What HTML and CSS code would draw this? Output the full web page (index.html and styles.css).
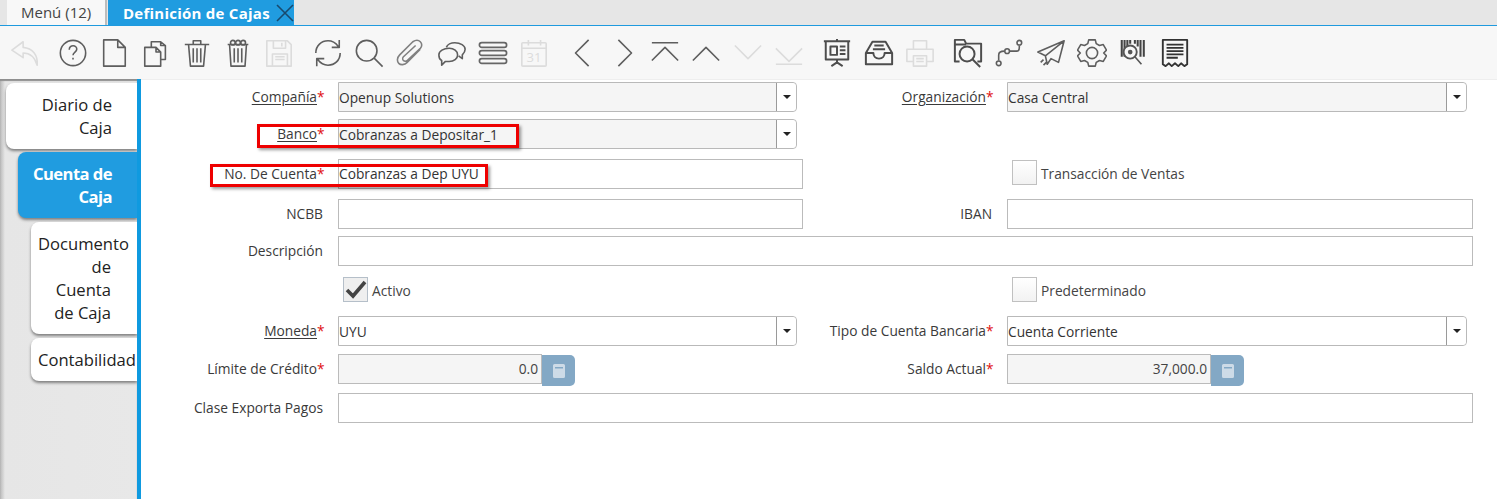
FILE: index.html
```html
<!DOCTYPE html>
<html lang="es">
<head>
<meta charset="utf-8">
<title>Definición de Cajas</title>
<link rel="stylesheet" href="styles.css">
</head>
<body>
<div class="tabbar">
  <div class="tab-menu">Menú (12)</div>
  <div class="tab-active"><span>Definición de Cajas</span>
    <svg class="tab-close" width="18" height="18" viewBox="0 0 18 18"><path d="M1 1l16 16M17 1L1 17"/></svg>
  </div>
</div>
<div class="toolbar">
  <div class="tb off"><svg viewBox="0 0 32 32"><path d="M14 4L2 13l12 8v-5c7 0 12 3 15 13 1-11-5-18-15-19z"/></svg></div>
  <div class="tb sep"><svg viewBox="0 0 32 32"><circle cx="16" cy="16" r="13.500"/><path d="M12 12.500c0-6 8.500-5 8-.5 0 3-4 3-4 6.500"/><path d="M16 21v2"/></svg></div>
  <div class="tb"><svg viewBox="0 0 32 32"><path d="M5 2h15l8 8v20H5zM20 2v8h8"/></svg></div>
  <div class="tb"><svg viewBox="0 0 32 32"><path d="M4 10h12l5 5v15H4zM11 10V4h10l5 4v15h-5M16 10v5h5M21 4v4h5"/></svg></div>
  <div class="tb"><svg viewBox="0 0 32 32"><path d="M3 7h26M12 6V3h8v3M7 7l2 23h14l2-23M12 11v15M16 11v15M20 11v15"/></svg></div>
  <div class="tb"><svg viewBox="0 0 32 32"><path d="M5 7h22M7 7l1.500 23h15L25 7M12 11v15M16 11v15M20 11v15"/><circle cx="10.500" cy="5" r="2.500"/><circle cx="16" cy="5" r="2.500"/><circle cx="21.500" cy="5" r="2.500"/></svg></div>
  <div class="tb off"><svg viewBox="0 0 32 32"><path d="M3 3h22l4 4v23H3zM10 3v8h13V3M19 5v4M9 30V17h16v13M12 20h10M12 23h10"/></svg></div>
  <div class="tb sep"><svg viewBox="0 0 32 32"><path d="M3 16C3 8 9 3 16 3c4 0 8 2 11 6M29 16c0 8-6 13-13 13-4 0-8-2-11-6M28 2v8h-8M4 30v-8h8"/></svg></div>
  <div class="tb"><svg viewBox="0 0 32 32"><circle cx="13.500" cy="13.500" r="11"/><path d="M21.500 21.500l9 9"/></svg></div>
  <div class="tb clip"><svg viewBox="0 0 32 32"><path d="M27 12L13 26c-3 3-7 3-9 1s-2-6 1-9L19 4c3-2 6-2 8 0s2 5 0 7L13 24c-1 1-3 1-4 0s-1-3 0-4L22 8"/></svg></div>
  <div class="tb"><svg viewBox="0 0 32 32"><path d="M13 11c5 0 9 3 9 7s-4 7-9 7H9l-4 4v-5c-2-1-3-4-3-6 0-4 5-7 11-7z"/><path d="M10 10c1-3 5-5 9-5 6 0 11 3 11 7 0 2-1 4-3 6v4l-4-3"/></svg></div>
  <div class="tb thick"><svg viewBox="0 0 32 32"><rect x="1.500" y="5" width="29" height="5" rx="2.500"/><rect x="1.500" y="13.500" width="29" height="5" rx="2.500"/><rect x="1.500" y="22" width="29" height="5" rx="2.500"/></svg></div>
  <div class="tb off"><svg viewBox="0 0 32 32"><rect x="3" y="5" width="26" height="25" rx="1"/><path d="M3 11h26M10 2v6M23 2v6"/><text x="16" y="26" text-anchor="middle" class="cal">31</text></svg></div>
  <div class="tb sep"><svg viewBox="0 0 32 32"><path d="M22 2L8 16l14 14"/></svg></div>
  <div class="tb"><svg viewBox="0 0 32 32"><path d="M10 2l14 14-14 14"/></svg></div>
  <div class="tb"><svg viewBox="0 0 32 32"><path d="M2 5h28M2 24L16 10l14 14"/></svg></div>
  <div class="tb"><svg viewBox="0 0 32 32"><path d="M2 24L16 10l14 14"/></svg></div>
  <div class="tb off"><svg viewBox="0 0 32 32"><path d="M2 8l14 14L30 8"/></svg></div>
  <div class="tb off"><svg viewBox="0 0 32 32"><path d="M2 28h28M2 11l14 14 14-14"/></svg></div>
  <div class="tb sep heavy"><svg viewBox="0 0 32 32"><path d="M2 3.500h28M4 4v19h24V4M16 1v3M16 23v3M10 30l6-4 6 4M9 9h7v9H9zM19 9h6M19 13h6M19 17h6"/></svg></div>
  <div class="tb heavy"><svg viewBox="0 0 32 32"><path d="M9 4h14l7 12v12H2V16zM2 16h8c0 3 2 6 6 6s6-3 6-6h8M11 8h10M9.500 12h13"/></svg></div>
  <div class="tb off"><svg viewBox="0 0 32 32"><path d="M9 12V3h14v9M9 25H2V12h28v13h-7M9 19h14v11H9zM12 22h8M12 25h8"/></svg></div>
  <div class="tb sep heavy"><svg viewBox="0 0 32 32"><path d="M26 25h4V6H14l-2-4H2v23h5M2 7h12"/><circle cx="15" cy="17" r="8"/><path d="M21 23l8 8"/></svg></div>
  <div class="tb"><svg viewBox="0 0 32 32"><circle cx="5" cy="27" r="2.500"/><circle cx="14" cy="14" r="2.500"/><circle cx="27" cy="5" r="2.500"/><path d="M5 24v-6c0-3 2-4 6-4M17 14h7c2 0 3-2 3-4V8"/></svg></div>
  <div class="tb"><svg viewBox="0 0 32 32"><path d="M30 3L2 15l8 4zM30 3L10 19l2 9 4-6 8 4zM8 23l-3 3M11 26l-3 3"/></svg></div>
  <div class="tb"><svg viewBox="0 0 32 32"><circle cx="16" cy="16" r="6"/><path d="M12.500 2h7l1 4 3.500 2 4-1 3.500 6-3 3 3 3-3.500 6-4-1-3.500 2-1 4h-7l-1-4L8 24l-4 1-3.500-6 3-3-3-3L4 7l4 1 3.500-2z"/></svg></div>
  <div class="tb"><svg class="bars" viewBox="0 0 32 32"><path d="M4 2v18M7 2v18M10 2v7M13 2v4M18 2v4M21 2v7M24 2v18M27.500 2v18"/><circle cx="13" cy="15" r="7" class="lens"/><circle cx="13" cy="15" r="2.500" class="lens-in"/><path d="M18 20l7 8" class="lens-h"/></svg></div>
  <div class="tb dark"><svg viewBox="0 0 32 32"><path d="M3 2h26v26l-3 2-3.500-3-3 3-3.500-3-3.500 3-3-3L6 30l-3-2zM7 7h18M7 10.500h18M7 14h18M7 17.500h18M7 21h12"/></svg></div>
</div>
<div class="workspace">
  <nav class="side">
    <div class="vtab level0"><span>Diario de Caja</span></div>
    <div class="vtab level1 current"><span>Cuenta de Caja</span></div>
    <div class="vtab level2"><span>Documento de Cuenta de Caja</span></div>
    <div class="vtab level2"><span>Contabilidad</span></div>
  </nav>
  <main class="panel">
    <form class="form">
      <label class="lbl"><u>Compañía</u><b>*</b></label>
      <div class="combo ro"><span>Openup Solutions</span><i class="drop"></i></div>
      <label class="lbl"><u>Organización</u><b>*</b></label>
      <div class="combo ro end"><span>Casa Central</span><i class="drop"></i></div>

      <label class="lbl"><u>Banco</u><b>*</b></label>
      <div class="combo ro"><span>Cobranzas a Depositar_1</span><i class="drop"></i></div>
      <div class="empty"></div><div class="empty"></div>

      <label class="lbl">No. De Cuenta<b>*</b></label>
      <div class="input">Cobranzas a Dep UYU</div>
      <div class="empty"></div>
      <div class="check low"><i class="box"></i>Transacción de Ventas</div>

      <label class="lbl">NCBB</label>
      <div class="input"></div>
      <label class="lbl">IBAN</label>
      <div class="input end"></div>

      <label class="lbl">Descripción</label>
      <div class="input wide"></div>

      <div class="empty"></div>
      <div class="check"><i class="box on"><svg width="25" height="25" viewBox="0 0 25 25"><path d="M4 13l6 6L22 5"/></svg></i>Activo</div>
      <div class="empty"></div>
      <div class="check"><i class="box"></i>Predeterminado</div>

      <label class="lbl"><u>Moneda</u><b>*</b></label>
      <div class="combo"><span>UYU</span><i class="drop"></i></div>
      <label class="lbl">Tipo de Cuenta Bancaria<b>*</b></label>
      <div class="combo end"><span>Cuenta Corriente</span><i class="drop"></i></div>

      <label class="lbl">Límite de Crédito<b>*</b></label>
      <div class="num"><span>0.0</span><i class="calc"><svg width="12" height="14" viewBox="0 0 12 14"><path d="M0 1.500A1.500 1.500 0 0 1 1.500 0h9A1.500 1.500 0 0 1 12 1.500v11a1.500 1.500 0 0 1-1.500 1.500h-9A1.500 1.500 0 0 1 0 12.500zM2 3v1.500h8V3z"/></svg></i></div>
      <label class="lbl">Saldo Actual<b>*</b></label>
      <div class="num"><span>37,000.0</span><i class="calc"><svg width="12" height="14" viewBox="0 0 12 14"><path d="M0 1.500A1.500 1.500 0 0 1 1.500 0h9A1.500 1.500 0 0 1 12 1.500v11a1.500 1.500 0 0 1-1.500 1.500h-9A1.500 1.500 0 0 1 0 12.500zM2 3v1.500h8V3z"/></svg></i></div>

      <label class="lbl">Clase Exporta Pagos</label>
      <div class="input wide"></div>
    </form>
  </main>
  <div class="mark mark-banco"></div>
  <div class="mark mark-cuenta"></div>
</div>
</body>
</html>
```
FILE: styles.css
```css
* { box-sizing: border-box; }
html, body { margin: 0; padding: 0; }
body {
  width: 1497px;
  height: 499px;
  overflow: hidden;
  background: #fff;
  font-family: "Open Sans", "Noto Sans", sans-serif;
  font-size: 13.75px;
  color: #333;
}

/* tabs */
.tabbar {
  display: flex;
  height: 26px;
  padding-left: 7px;
  background: #e6e6e6;
  border-bottom: 1px solid #1f9ade;
}
.tab-menu {
  width: 100px;
  padding-left: 14px;
  line-height: 24px;
  font-size: 15px;
  color: #444;
  background: #f8f8f8;
  border-right: 2px solid #bdbdbd;
}
.tab-active {
  display: flex;
  align-items: center;
  width: 186px;
  padding-left: 15px;
  background: #209ce0;
  color: #fff;
  font-weight: 700;
  font-size: 15px;
  letter-spacing: .25px;
  white-space: nowrap;
  margin-left: 1px;
}
.tab-close { flex: none; margin-left: auto; margin-right: 0; fill: none; stroke: #184a6e; stroke-width: 1.6; }

/* toolbar */
.toolbar {
  display: flex;
  align-items: center;
  height: 53px;
  padding-left: 4px;
  background: #f7f7f7;
}
.tb {
  flex: none;
  width: 41.3px;
  display: flex;
  justify-content: center;
}
.tb.sep { margin-left: 7px; }
.tb svg {
  width: 30px;
  height: 30px;
  fill: none;
  stroke: #5e5e5e;
  stroke-width: 1.7;
  stroke-linejoin: round;
}
.tb.off svg { stroke: #dcdcdc; }
.tb.thick svg { stroke: #666; stroke-width: 1.8; }
.tb.clip svg { stroke: #808080; }
.tb.dark svg { stroke: #333; stroke-width: 2; }
.tb.heavy svg { stroke: #4d4d4d; stroke-width: 2.1; }
.tb .cal { fill: #dcdcdc; stroke: none; font-size: 14px; font-family: "Open Sans", sans-serif; }
.tb .bars { stroke: #444; stroke-width: 2.2; }
.tb .bars .lens { fill: #f7f7f7; stroke: #555; stroke-width: 2; }
.tb .bars .lens-in { fill: #555; stroke: none; }
.tb .bars .lens-h { stroke: #555; stroke-width: 1.7; }

/* workspace */
.workspace {
  position: relative;
  display: flex;
  height: 420px;
}
.side {
  flex: none;
  width: 137px;
  padding-top: 4px;
  background: linear-gradient(90deg, #b9b9b9 0, #e6e6e6 5px, #e8e8e8 100%);
  box-shadow: inset 0 2px 1px #8f8f8f;
  display: flex;
  flex-direction: column;
  align-items: flex-end;
  gap: 3px;
}
.vtab {
  background: #fff;
  border-radius: 8px 0 0 8px;
  box-shadow: 0 2px 3px rgba(0, 0, 0, .45);
  font-size: 16.6px;
  line-height: 23px;
  color: #222;
  text-align: right;
  white-space: normal;
}
.vtab span { display: block; }
.level0 { width: 131px; padding: 10px 25px 10px 30px; }
.level1 { width: 119px; padding: 10px 25px 10px 10px; }
.level2 { width: 106px; padding: 10px 26px 10px 7px; margin-top: 1px; }
.current { background: #209ce0; color: #fff; font-weight: 700; letter-spacing: -.55px; }

.panel {
  flex: 1;
  border-left: 4px solid #0f9ae0;
  box-shadow: inset 0 1px 0 #eee;
}

/* form */
.form {
  display: grid;
  grid-template-columns: 182px 480px 189px 481px;
  grid-template-rows: 37px 40px 40px 37px 41px 39px 38px 39px 30px;
  padding-top: 3px;
  align-items: start;
}
.lbl {
  display: block;
  height: 30px;
  line-height: 30px;
  text-align: right;
  color: #3a3a3a;
  white-space: nowrap;
}
.lbl u { text-underline-offset: 2px; }
.lbl b { display: inline-block; width: 6px; color: #e01010; font-weight: 400; text-align: left; }
.combo, .input, .num, .check { margin-left: 15px; }
.combo {
  display: flex;
  width: 459px;
  height: 30px;
  border: 1px solid #b9b9b9;
  border-radius: 0 4px 4px 0;
  background: #fff;
  color: #333;
}
.combo.end { width: 460px; }
.combo.ro { background: #f5f5f5; }
.combo span { flex: 1; line-height: 30px; }
.drop {
  position: relative;
  flex: none;
  width: 20px;
  background: #fff;
  border-left: 1px solid #9a9a9a;
  border-radius: 0 4px 4px 0;
}
.drop::after {
  content: "";
  position: absolute;
  left: 6px;
  top: 12px;
  border: 4px solid transparent;
  border-top: 4px solid #222;
  border-bottom: 0;
}
.input {
  width: 465px;
  height: 30px;
  line-height: 28px;
  border: 1px solid #bbb;
  background: #fff;
  color: #333;
}
.input.end { width: 466px; }
.input.wide { grid-column: 2 / 5; width: 1135px; }
.check {
  display: flex;
  align-items: flex-start;
  gap: 4px;
  height: 25px;
  line-height: 27px;
  color: #444;
  padding-left: 5px;
}
.check.low { margin-top: 1px; }
.box {
  flex: none;
  width: 25px;
  height: 25px;
  border: 1px solid #c0c0c0;
  background: linear-gradient(#fff, #f2f2f2);
}
.box.on { background: #efefef; border-color: #b5bfc9; }
.box svg { display: block; margin: -1px; fill: none; stroke: #444; stroke-width: 3.6; }
.num {
  display: flex;
  align-items: flex-start;
  height: 31px;
}
.num span {
  width: 204px;
  height: 30px;
  line-height: 28px;
  border: 1px solid #bbb;
  background: #f5f5f5;
  text-align: right;
  padding-right: 3px;
  color: #444;
}
.calc {
  width: 33px;
  height: 31px;
  margin-top: 1px;
  border-radius: 0 5px 5px 0;
  background: #83a8c5;
  display: flex;
  align-items: center;
  justify-content: center;
}
.calc svg { fill: #cddbe7; fill-rule: evenodd; }

/* red annotations drawn over the screenshot */
.mark {
  position: absolute;
  border: 3px solid #ee0000;
  box-shadow: 2px 2px 3px rgba(0, 0, 0, .4);
}
.mark-banco { left: 257px; top: 45px; width: 262px; height: 24px; }
.mark-cuenta { left: 210px; top: 85px; width: 278px; height: 23px; }
```
